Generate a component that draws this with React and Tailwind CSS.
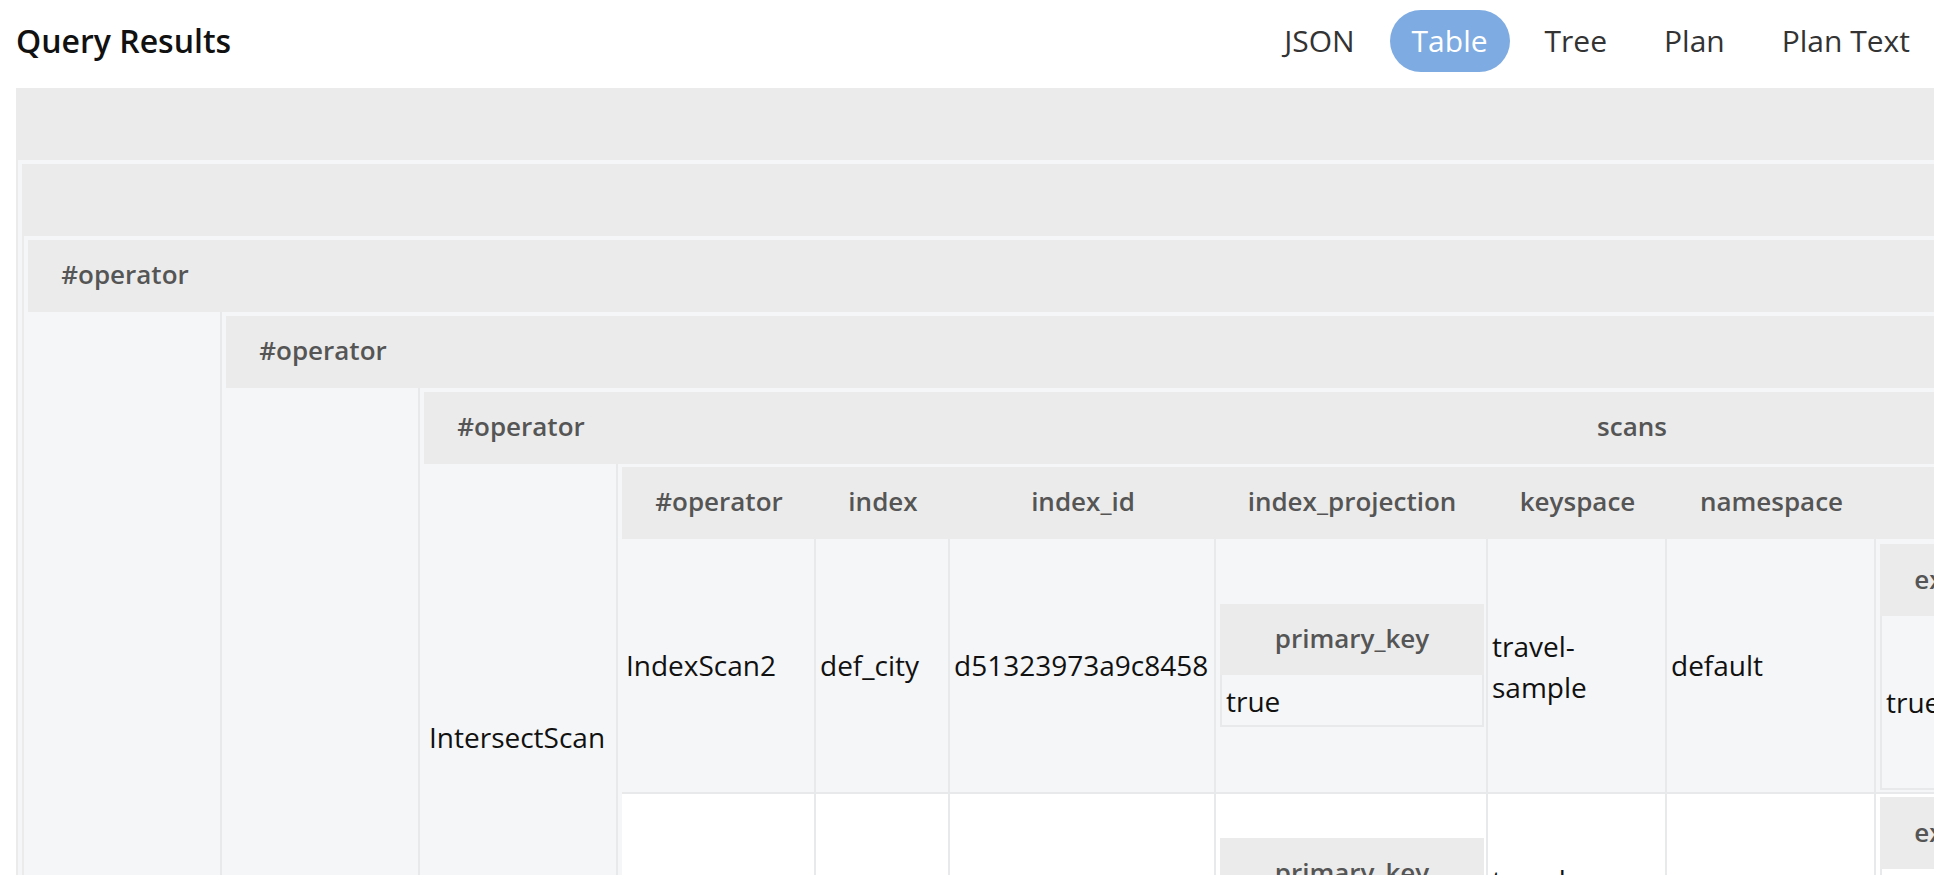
import React from "react";

const HEAD = "bg-[#ebebeb] text-[26px] font-semibold text-[#555]";
const LINE = "border-[#e8e9eb]";

const tabs = ["JSON", "Table", "Tree", "Plan", "Plan Text"];

function EmptyHeadTable({ children }) {
  return (
    <div className="flex w-max min-w-full flex-col">
      <div className="h-[72px] shrink-0 bg-[#ebebeb]" />
      <div className="border-l-2 border-[#ebebeb] bg-[#f5f6f8] pl-1 pt-1">{children}</div>
    </div>
  );
}

function OperatorTable({ children }) {
  return (
    <div className="flex w-max flex-col">
      <div className={`flex h-[72px] shrink-0 ${HEAD}`}>
        <div className="flex w-[194px] shrink-0 items-center justify-center pb-[4px]">#operator</div>
        <div className="flex-1" />
      </div>
      <div className="flex bg-[#f5f6f8]">
        <div className={`w-[194px] shrink-0 border-r-2 ${LINE}`} />
        <div className="pl-1 pt-1">{children}</div>
      </div>
    </div>
  );
}

function PrimaryKey() {
  return (
    <div className="flex flex-1 flex-col">
      <div className={`flex h-[71px] items-center justify-center pb-[2px] ${HEAD}`}>primary_key</div>
      <div className={`flex h-[52px] items-center border-x-2 border-b-2 ${LINE} px-1 pt-[2px] text-[28px]`}>true</div>
    </div>
  );
}

function Spans() {
  return (
    <div className="flex flex-1 flex-col">
      <div className={`flex h-[72px] shrink-0 ${HEAD}`}>
        <div className="flex w-[136px] shrink-0 items-center justify-center pb-[2px]">exact</div>
        <div className="flex-1" />
      </div>
      <div className="flex flex-1">
        <div className={`flex w-[136px] shrink-0 items-center border-2 border-t-0 ${LINE} px-1 text-[28px]`}>true</div>
        <div className={`flex-1 border-b-2 border-r-2 ${LINE}`} />
      </div>
    </div>
  );
}

const CELL = `flex shrink-0 items-center border-r-2 ${LINE} px-1 text-[28px] leading-[41px]`;

function ScanRow({ bg, h, op, idx, id, top, ns }) {
  return (
    <div className={`flex ${h} border-b-2 ${LINE} ${bg}`}>
      <div className={`${CELL} w-[194px]`}>{op}</div>
      <div className={`${CELL} w-[134px]`}>{idx}</div>
      <div className={`${CELL} w-[266px]`}>{id}</div>
      <div className={`flex w-[272px] shrink-0 items-center border-r-2 ${LINE} pl-1 pr-[2px]`}>
        <PrimaryKey />
      </div>
      <div className={`${CELL} w-[179px] pt-[2px]`}>
        <span>
          travel-
          <br />
          sample
        </span>
      </div>
      <div className={`${CELL} w-[209px]`}>{ns}</div>
      <div className={`flex w-[380px] shrink-0 flex-col border-r-2 ${LINE} pb-[2px] pl-1 ${top}`}>
        <Spans />
      </div>
      <div className={`${CELL} w-[390px]`} />
    </div>
  );
}

function ScansTable() {
  const heads = [
    ["#operator", "w-[194px]"],
    ["index", "w-[134px]"],
    ["index_id", "w-[266px]"],
    ["index_projection", "w-[272px]"],
    ["keyspace", "w-[179px]"],
    ["namespace", "w-[209px]"],
    ["", "w-[380px]"],
    ["", "w-[390px]"],
  ];
  return (
    <div className="flex w-max flex-col">
      <div className={`flex h-[72px] shrink-0 ${HEAD}`}>
        {heads.map(([t, w], i) => (
          <div key={i} className={`flex ${w} shrink-0 items-center justify-center pb-[3px]`}>
            {t}
          </div>
        ))}
      </div>
      <ScanRow bg="bg-[#f5f6f8]" h="h-[255px]" top="pt-[5px]" op="IndexScan2" idx="def_city" id="d51323973a9c8458" ns="default" />
      <ScanRow bg="bg-white" h="h-[213px]" top="pt-[3px]" op="" idx="" id="" ns="" />
    </div>
  );
}

function IntersectTable() {
  return (
    <div className="flex w-max flex-col">
      <div className={`flex h-[72px] shrink-0 ${HEAD}`}>
        <div className="flex w-[194px] shrink-0 items-center justify-center pb-[4px]">#operator</div>
        <div className="flex w-[2028px] shrink-0 items-center justify-center pb-[4px]">scans</div>
      </div>
      <div className="flex bg-[#f5f6f8]">
        <div className={`flex w-[194px] shrink-0 items-center border-r-2 ${LINE} pl-[5px] pt-[4px] text-[28px] leading-[41px]`}>
          IntersectScan
        </div>
        <div className="pl-1 pt-[3px]">
          <ScansTable />
        </div>
      </div>
    </div>
  );
}

export default function App() {
  return (
    <div className="h-[884px] w-[1948px] overflow-hidden bg-white font-['Open_Sans',sans-serif] text-[#111]">
      <div className="flex h-[82px] items-center justify-between pl-4 pr-4">
        <h1 className="text-[32px] font-semibold leading-none text-[#111]">Query Results</h1>
        <div className="flex items-center gap-[13px]">
          {tabs.map((t) => (
            <button
              key={t}
              className={
                t === "Table"
                  ? "h-[62px] rounded-full bg-[#7dabe2] px-[22px] text-[30px] leading-none text-white"
                  : "h-[62px] rounded-full px-[22px] text-[30px] leading-none text-[#333]"
              }
            >
              {t}
            </button>
          ))}
        </div>
      </div>
      <div className="ml-4 mt-[6px] h-[787px] w-[1918px] overflow-hidden">
        <EmptyHeadTable>
          <EmptyHeadTable>
            <OperatorTable>
              <OperatorTable>
                <IntersectTable />
              </OperatorTable>
            </OperatorTable>
          </EmptyHeadTable>
        </EmptyHeadTable>
      </div>
    </div>
  );
}
